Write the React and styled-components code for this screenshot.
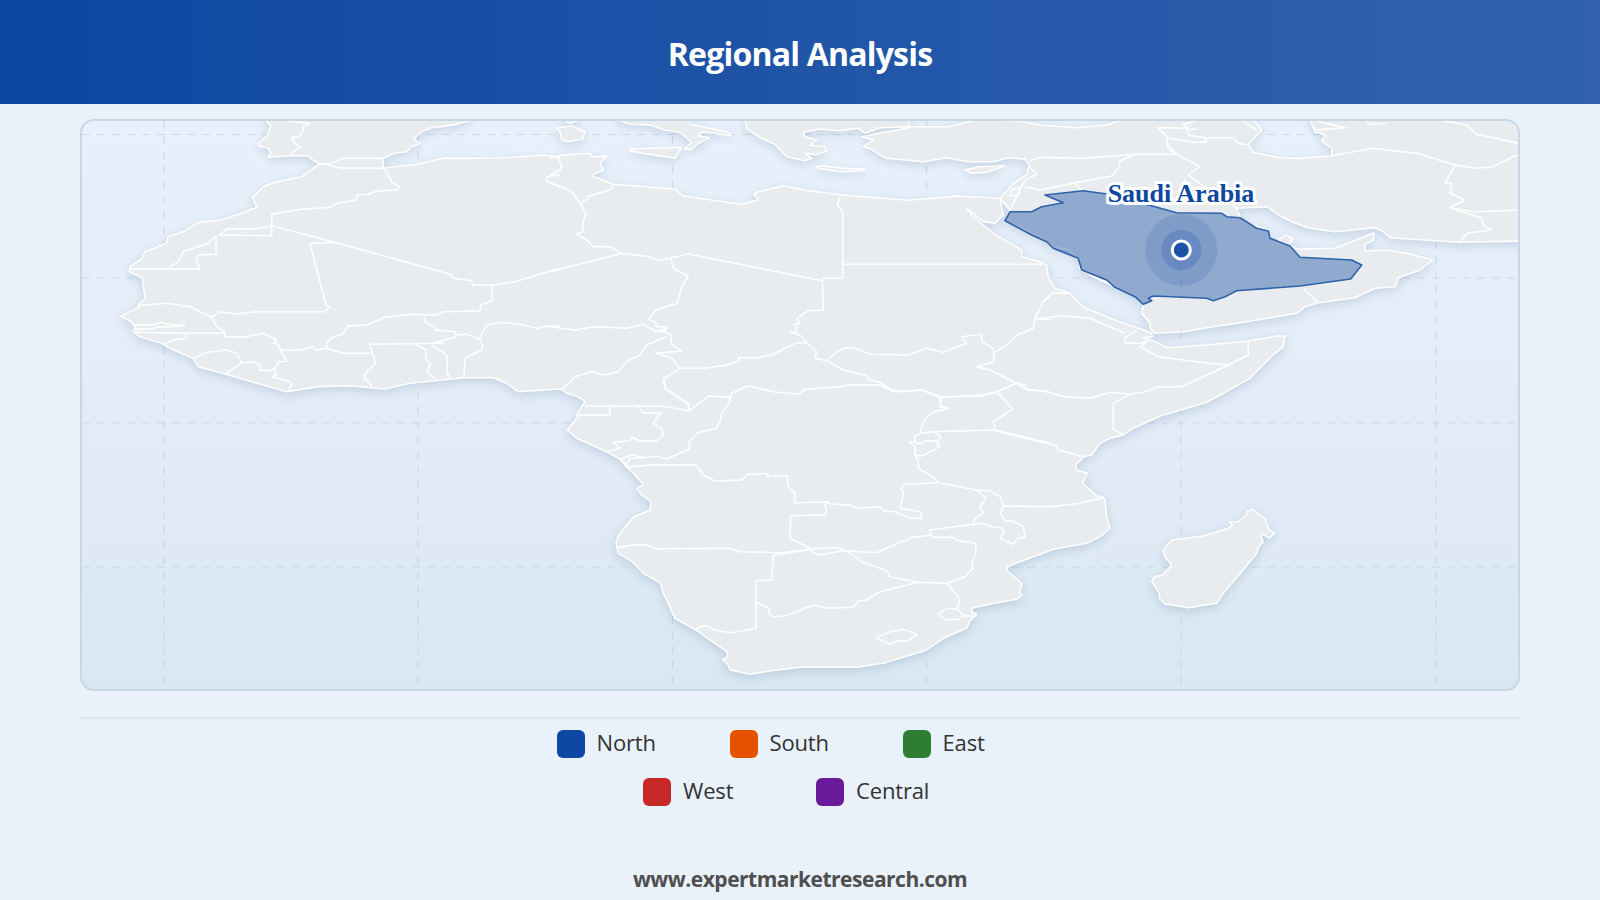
import React from 'react';
import styled, { createGlobalStyle } from 'styled-components';

// map was traced from crops of the picture, each crop has its own origin at 1/3 scale
const at = (ox, oy) => (str) =>
  str
    .trim()
    .split(/\s+/)
    .map((p) => {
      const [x, y] = p.split(',');
      return `${(ox + x / 3).toFixed(1)},${(oy + y / 3).toFixed(1)}`;
    })
    .join(' ');

const A = at(110, 115);
const B = at(550, 115);
const C = at(1040, 115);
const D = at(550, 380);
const E = at(880, 330);
const S = at(1000, 170);
const Z = at(950, 116);

const land = [
  // africa
  [
    A('630,146 575,185 490,203 460,215 428,247 440,277 395,295 330,316 265,322 225,348 175,365 170,385 105,410 95,432 60,455 58,470 97,488 102,530 105,550 85,570 90,575 60,590 32,604 60,618 75,635 70,650 90,665 155,685 185,703 250,730 265,755 345,777 440,805 530,830 625,815 720,812 825,822 900,805 1060,788 1150,788 1190,805 1225,830 1350,822'),
    D('37,30 50,40 85,50 105,65 80,105 85,110 52,150 80,175 170,215 210,238 230,262 250,280 280,313 260,325 275,345 303,365 300,390 250,412 225,440 203,470 198,490 205,520 247,545 280,580 330,608 340,640 375,715 435,748 530,815 533,830 518,838 535,855 540,870 600,883 660,873 750,862 920,862 1000,850 1130,810 1180,775 1250,745 1262,720 1280,703 1265,697 1265,685 1320,672 1400,658 1417,645 1410,640 1415,610 1370,570 1375,558'),
    E('380,710 440,688 520,658 620,640 660,620 690,595 680,560 675,510 668,500 650,498 608,460 622,430 590,420 587,405 612,380 635,375 660,340 690,325 730,315 755,297 840,258 985,215 1110,145 1185,70 1210,50 1215,18 1190,18 1105,33 980,45 860,53 820,32 790,25 817,20 815,8'),
    C('250,625 210,610 130,575 90,535 45,520 25,485 20,450 0,440'),
    B('1415,425 1415,405 1330,355 1265,300 1250,280 1300,320 1335,325 1360,300 1350,250 1220,243 1075,256 880,240 780,228 700,213 625,230 612,237 625,255 575,268 400,243 375,222 190,208 160,195 125,182 160,165 150,145 170,123 125,125 120,115 40,120 0,128'),
    A('1350,125 1300,120 1190,128 1000,130 920,148 820,160 690,158 660,148'),
  ],
  // iberia
  [A('640,146 700,130 820,130 820,160 690,158')],
  [A('465,0 465,13 482,33 472,62 445,85 445,92 475,100 483,115 473,127 540,122 595,122 612,138 630,146 660,146 700,130 820,130 855,115 890,110 905,95 930,85 912,72 935,50 965,38 1030,30 1082,16 1082,0')],
  // islands
  [B('45,0 45,15 60,25 85,15 85,0')],
  [B('20,40 65,32 105,50 98,72 55,80 35,75 30,50')],
  [B('200,0 200,13 240,28 300,30 345,45 390,52 425,82 403,103 425,103 445,85 478,68 445,62 460,50 505,57 545,62 530,50 420,28 415,0')],
  [B('240,102 395,97 375,130 310,120 240,108')],
  [B('585,0 585,13 590,40 630,68 675,88 710,125 765,137 785,130 765,115 795,120 830,108 825,95 780,90 800,75 765,65 760,52 810,42 870,47 925,40 945,55 990,38 1080,35 1075,0')],
  [B('800,155 815,152 880,160 945,162 935,167 870,170 805,160')],
  [B('1245,165 1290,155 1365,152 1310,172 1265,175')],
  // asia and arabia
  [
    B('1350,250 1390,205 1430,178 1438,150 1425,133 1375,128 1330,140 1255,140 1190,128 1120,140 1010,130 990,120 965,103 940,95 970,75 935,65 1010,50 1090,35 1195,35 1280,16 1400,17'),
    C('0,30 110,38 200,30 255,13 255,0 640,0 640,13 665,45 655,57 625,88 640,112 720,128 790,130 875,122 875,100 845,78 855,60 825,50 815,25 805,0 1460,0 1460,378 1260,382 1150,375 1050,368 1030,350 1005,338 885,350 810,340 755,320 715,300 680,275 590,280 600,305 620,325 685,345 685,365 715,385 750,392 775,402 885,400 1003,353 1000,375 975,388 975,408 1040,405 1100,415 1178,435 1140,465 1075,488 1065,515 1005,520 945,548 835,563 795,575 770,595 620,620 520,635 430,650 345,655 330,640 330,625 305,595 310,570 285,545 225,515 160,485 120,462 120,435 85,405 40,395 0,365'),
    B('1365,318 1380,285'),
  ],
  [C('715,375 735,360 760,372 745,392')],
  // madagascar
  [E('850,660 875,630 970,618 1045,595 1057,585 1048,575 1075,575 1100,555 1100,545 1117,538 1155,565 1168,600 1183,608 1168,625 1150,613 1143,620 1150,635 1135,652 1130,670 1085,725 1030,790 1010,820 925,833 855,822 838,805 838,790 815,755 822,740 848,735 875,705 855,680')],
];

const borders = [
  // north west africa
  A('465,13 515,15 550,20 600,25 580,35 578,50 568,65 545,67 555,85 570,97 548,112 543,122'),
  A('820,160 835,180 845,200 870,218 860,225 800,228 775,238 742,240 738,255 680,265 660,277 575,283 485,298 485,332'),
  A('485,322 478,335 435,342 350,342 328,360 485,362 485,332'),
  A('318,362 295,385 220,410 205,440 178,458'),
  A('318,362 318,418 268,420 258,430 268,462 60,462'),
  A('485,332 680,383 1020,478 1030,490 1085,497 1088,511 1145,511 1215,500 1350,460'),
  B('0,470 215,415 300,425 325,437 415,417 817,497'),
  A('680,383 600,385 648,570 658,575 645,590 440,590 380,597 330,590 305,607 240,575 170,565 100,570 85,570'),
  A('1145,511 1145,558 1112,570 1110,588 1000,590 980,600 900,598 825,607 770,630 715,633 700,655 660,672 648,690 652,700 615,705 610,695 575,705 510,705 505,688 490,685 500,675 460,655 400,667 345,665 343,650 320,635 305,607'),
  A('345,655 230,655 80,652'),
  A('73,630 130,630 150,622 185,630 225,630 190,635 150,635 120,642 75,642'),
  A('230,655 228,670 190,675 160,687'),
  A('510,705 530,738 505,742 495,760 475,768 450,765 450,750 430,740 395,743 380,715 350,705 290,712 252,730'),
  A('395,743 355,770 345,777'),
  A('495,760 497,780 488,785 540,800 545,805 535,830'),
  A('652,700 700,715 780,715'),
  A('782,815 785,810 762,790 770,770 798,745 778,688 1000,685'),
  A('920,690 948,705 948,735 962,745 950,770 980,795'),
  A('965,690 968,695 1000,712 1012,725 1012,775 1022,792'),
  A('1062,788 1065,730 1115,705 1118,690 1108,672'),
  A('970,685 1037,665 1037,650 978,645 975,635 945,622 942,605'),
  A('1037,660 1070,658 1108,672 1130,630 1180,622 1240,630 1280,640 1320,632 1350,635'),
  B('0,635 75,645 130,635 230,640 280,628 320,650 350,640'),
  // sahara and sudan
  B('90,265 115,250 115,245 185,222 190,208'),
  B('0,203 40,218 65,230 90,265 108,295 100,320 98,350 80,358 110,375 130,395 180,395 215,415'),
  A('1350,178 1310,185 1312,200 1350,215'),
  B('0,180 30,165 35,150 25,130 30,125'),
  B('362,430 372,462 415,483 395,515 382,565 318,585 295,612 318,622 318,635 350,635 345,648 325,652'),
  B('870,243 862,270 878,290 878,490 817,490 820,585 775,587 740,612 750,625 735,628 740,650 720,652 750,660 768,680 800,710 795,730 830,737 880,765 945,780 960,795 990,802 1025,825 1050,830 1115,825 1170,847'),
  B('878,448 1480,448'),
  B('770,683 735,685 670,718 625,728 565,728 568,738 520,752 460,760 390,760 365,730 318,715 395,708 365,688 362,658 335,647'),
  B('350,665 290,690 270,720 230,740 205,770 165,780 125,770 75,785 38,822'),
  B('830,737 860,710 885,698 915,700 960,718 1075,720 1130,700 1180,712 1250,685 1235,665 1295,658 1295,680 1330,700 1332,740 1280,755 1320,765 1400,805'),
  B('1330,715 1370,690 1400,660 1450,640 1455,610 1500,615'),
  B('1455,610 1480,560 1500,545'),
  C('0,612 60,602 150,610 255,655'),
  C('10,560 35,535 90,535'),
  B('1400,805 1340,830 1300,842 1170,847'),
  B('1400,805 1430,825 1500,830'),
  B('390,760 342,790 345,820 395,855 415,870 418,885'),
  B('1170,847 1172,875 1195,878'),
  // central and southern africa
  D('105,78 180,78 265,78 335,78 418,92 415,70 345,25 340,0'),
  D('180,78 180,105 85,105'),
  D('265,80 280,98 332,98 310,130 335,145 340,165 320,183 270,183 245,172 240,182 190,187 210,205 170,215'),
  D('418,92 475,48 540,52 545,40 595,18 670,35 745,43 765,28 870,20 890,15 990,15 1030,35 1115,30 1175,52 1300,45 1340,35 1400,10'),
  D('540,52 540,65 515,100 510,125 498,145 440,160 418,185 418,208 350,237 320,228 285,233 245,225 210,238'),
  D('215,240 230,255 240,235 280,233'),
  D('228,262 300,255 437,255 460,285 495,303 575,300 595,283 625,283 655,280 650,288 712,288 715,320 735,340 733,368 835,365 840,372 900,375 920,385 990,380 1000,392 1035,395 1080,415 1115,415 1112,395 1050,385 1062,337 1052,327 1065,313 1165,308'),
  D('835,365 825,375 830,390 825,405 722,407 720,475 785,507 830,503 860,503 890,513 980,518 1050,487 1075,480 1080,473 1145,465'),
  D('198,503 250,495 290,495 320,506 535,505 570,515 700,518 785,507'),
  D('785,508 670,525 665,600 618,602 618,745 545,758 490,750 480,740 460,737 437,748'),
  D('780,512 805,525 880,512'),
  D('618,665 660,688 655,700 670,710 705,708 765,685 790,675 835,685 910,682 925,662 950,660 990,635 1105,607 1190,610'),
  D('890,513 935,545 1010,572 1020,590 1040,595 1105,607'),
  D('1190,610 1245,590 1270,565 1265,550 1277,520 1277,490 1225,482 1205,472 1148,472 1138,450 1295,430 1325,440 1358,445 1362,455 1350,475 1388,493 1405,475 1425,472 1420,440 1385,422 1365,422 1350,398 1362,378 1500,380'),
  E('510,530 600,520 668,503'),
  D('1280,330 1308,355 1290,382 1300,398 1280,412 1268,428'),
  D('1165,308 1280,330 1320,332 1350,350 1362,378'),
  D('1165,308 1140,285 1105,265 1105,240 1095,225 1115,228 1170,200 1160,190 1172,170 1150,155 1335,150 1500,190'),
  D('1150,155 1110,160 1095,170 1095,185 1080,187 1095,200 1095,225'),
  D('1095,190 1115,190 1125,182 1160,183'),
  D('1175,52 1170,80 1195,85 1150,97 1125,118 1110,155'),
  D('1335,150 1330,125 1388,87 1340,35'),
  D('1190,610 1230,657 1222,685 1240,708 1280,708'),
  D('1222,688 1190,685 1165,703 1190,720 1225,718 1238,708'),
  D('978,775 1015,757 1060,748 1100,763 1075,782 1045,782 1020,792 978,775'),
  // horn of africa
  E('340,300 530,347 535,360 612,380'),
  E('730,315 700,297 700,220 750,193 790,187 835,170 905,170 1045,105 1105,75 1105,33'),
  E('1045,105 985,100 835,80 780,50 805,33'),
  E('410,160 435,165 440,178 490,183 555,200 630,205 690,187 750,193'),
  E('345,188 410,160'),
  E('770,0 735,25 735,40 780,40 805,33'),
  // middle east
  C('0,127 130,130 290,118 410,118 380,85'),
  C('285,118 240,138 235,160 215,183 105,203 0,225'),
  C('105,203 125,228'),
  C('410,118 480,155 445,180 500,220 560,255 590,280'),
  C('355,38 445,40 430,28 480,13 600,13 650,45'),
  C('355,40 375,60 385,70 465,82 500,82 495,68 445,60 440,45 470,42'),
  C('380,70 385,100 410,120'),
  C('500,68 580,68 595,85 620,90'),
  C('875,122 1000,100 1040,105 1130,115 1245,150 1310,160 1360,155 1425,122 1460,118'),
  C('1245,150 1215,205 1235,205 1230,235 1275,255 1230,278 1325,310 1330,330 1355,345 1280,355 1260,382'),
  C('1230,278 1300,290 1460,285'),
  C('1185,13 1280,30 1310,58 1460,90'),
  C('810,13 915,38 830,45'),
  C('980,13 985,28 1040,25'),
  C('790,520 835,563'),
  B('1350,250 1380,285'),
  Z('240,135 270,123'),
  Z('235,150 262,175 228,190 212,215 185,222 180,240 205,238 212,215'),
  Z('270,222 225,212'),
  Z('180,282 212,215'),
];

const saudi = S('15,152 30,125 95,125 125,110 190,98 135,75 250,62 320,72 465,110 530,128 665,130 680,140 720,143 770,175 805,183 810,205 870,228 900,262 1055,270 1085,285 1052,327 900,348 710,362 675,380 640,392 620,385 460,378 445,385 455,392 430,403 405,380 345,352 320,330 245,300 235,265 160,235 140,215 95,195');

const gridX = [164, 418, 672.5, 926.5, 1181, 1436];
const gridY = [134.5, 278, 423, 567];

const legendRows = [
  [
    { name: 'North', color: '#0d47a1' },
    { name: 'South', color: '#e65100' },
    { name: 'East', color: '#2e7d32' },
  ],
  [
    { name: 'West', color: '#c62828' },
    { name: 'Central', color: '#6a1b9a' },
  ],
];

const GlobalStyle = createGlobalStyle`
  html, body {
    margin: 0;
    height: 100%;
    background: #e9f1fb;
    overflow: hidden;
  }
  body {
    font-family: 'Open Sans', 'Noto Sans', sans-serif;
  }
`;

const Page = styled.div`
  width: 1600px;
  height: 900px;
  display: flex;
  flex-direction: column;
`;

const Header = styled.header`
  height: 104px;
  flex: none;
  display: flex;
  align-items: center;
  justify-content: center;
  background: linear-gradient(90deg, #0d47a1 0%, #3262ae 100%);
`;

const Title = styled.h1`
  margin: 2px 0 0;
  color: #fff;
  font-size: 32px;
  font-weight: 700;
  letter-spacing: -0.8px;
`;

const Main = styled.main`
  flex: 1;
  display: flex;
  flex-direction: column;
  padding: 15px 80px 0;
`;

const MapCard = styled.div`
  height: 572px;
  flex: none;
  box-sizing: border-box;
  border: 2px solid #c8d7e6;
  border-radius: 14px;
  overflow: hidden;
  background: linear-gradient(180deg, #e8f1fb 0%, #e1ebf6 62%, #d9e7f1 100%);
`;

const MapSvg = styled.svg`
  display: block;
  width: 100%;
  height: 100%;
`;

const GridLine = styled.line`
  stroke: #c4d2df;
  stroke-width: 1.2;
  stroke-dasharray: 8 7;
  opacity: 0.75;
`;

const Land = styled.g`
  filter: drop-shadow(0 3px 5px rgba(30, 70, 120, 0.16));
  polygon {
    fill: #e8ecef;
    stroke: #fff;
    stroke-width: 1.5;
    stroke-linejoin: round;
  }
`;

const Borders = styled.g`
  polyline {
    fill: none;
    stroke: #fff;
    stroke-width: 1.5;
    stroke-linejoin: round;
  }
`;

const Region = styled.polygon`
  fill: rgba(13, 71, 161, 0.4);
  stroke: #2f62aa;
  stroke-width: 1.6;
  stroke-linejoin: round;
`;

const Halo = styled.circle`
  fill: #0d47a1;
  opacity: ${(p) => p.$opacity};
`;

const Dot = styled.circle`
  fill: #1a52a6;
  stroke: #fff;
  stroke-width: 3;
`;

const RegionLabel = styled.text`
  font-family: 'Liberation Serif', 'Times New Roman', serif;
  font-size: 26px;
  font-weight: 700;
  fill: #0d47a1;
  stroke: #fff;
  stroke-width: 6px;
  stroke-linejoin: miter;
  paint-order: stroke;
  text-anchor: middle;
`;

const Legend = styled.div`
  margin-top: 26px;
  border-top: 2px solid #d8e4f0;
  padding-top: 11px;
  display: flex;
  flex-direction: column;
  gap: 20px;
`;

const LegendRow = styled.div`
  display: flex;
  justify-content: center;
  gap: 32px;
`;

const LegendItem = styled.div`
  width: 141px;
  display: flex;
  align-items: center;
  gap: 12px;
`;

const Swatch = styled.span`
  width: 28px;
  height: 28px;
  border-radius: 6px;
  background: ${(p) => p.$color};
`;

const LegendName = styled.span`
  font-size: 22px;
  line-height: 24px;
  padding-bottom: 4px;
  letter-spacing: -0.15px;
  color: #333;
`;

const Footer = styled.footer`
  margin-top: 58px;
  text-align: center;
  font-size: 21px;
  line-height: 30px;
  font-weight: 700;
  letter-spacing: -0.5px;
  color: #4f4f4f;
`;

function AfricaMap() {
  return (
    <MapSvg viewBox="82 121 1436 568">
      {gridX.map((x) => (
        <GridLine key={x} x1={x} x2={x} y1={121} y2={689} />
      ))}
      {gridY.map((y) => (
        <GridLine key={y} x1={82} x2={1518} y1={y} y2={y} />
      ))}
      <Land>
        {land.map((parts, i) => (
          <polygon key={i} points={parts.join(' ')} />
        ))}
      </Land>
      <Borders>
        {borders.map((points, i) => (
          <polyline key={i} points={points} />
        ))}
      </Borders>
      <GridLine x1={1181} x2={1181} y1={250} y2={300} />
      <Region points={saudi} />
      <Halo cx={1181.3} cy={250} r={36} $opacity={0.13} />
      <Halo cx={1181.3} cy={250} r={20} $opacity={0.2} />
      <Dot cx={1181.3} cy={250} r={9} />
      <RegionLabel x={1181} y={202}>Saudi Arabia</RegionLabel>
    </MapSvg>
  );
}

export default function App() {
  return (
    <Page>
      <GlobalStyle />
      <Header>
        <Title>Regional Analysis</Title>
      </Header>
      <Main>
        <MapCard>
          <AfricaMap />
        </MapCard>
        <Legend>
          {legendRows.map((row, i) => (
            <LegendRow key={i}>
              {row.map((item) => (
                <LegendItem key={item.name}>
                  <Swatch $color={item.color} />
                  <LegendName>{item.name}</LegendName>
                </LegendItem>
              ))}
            </LegendRow>
          ))}
        </Legend>
        <Footer>www.expertmarketresearch.com</Footer>
      </Main>
    </Page>
  );
}
